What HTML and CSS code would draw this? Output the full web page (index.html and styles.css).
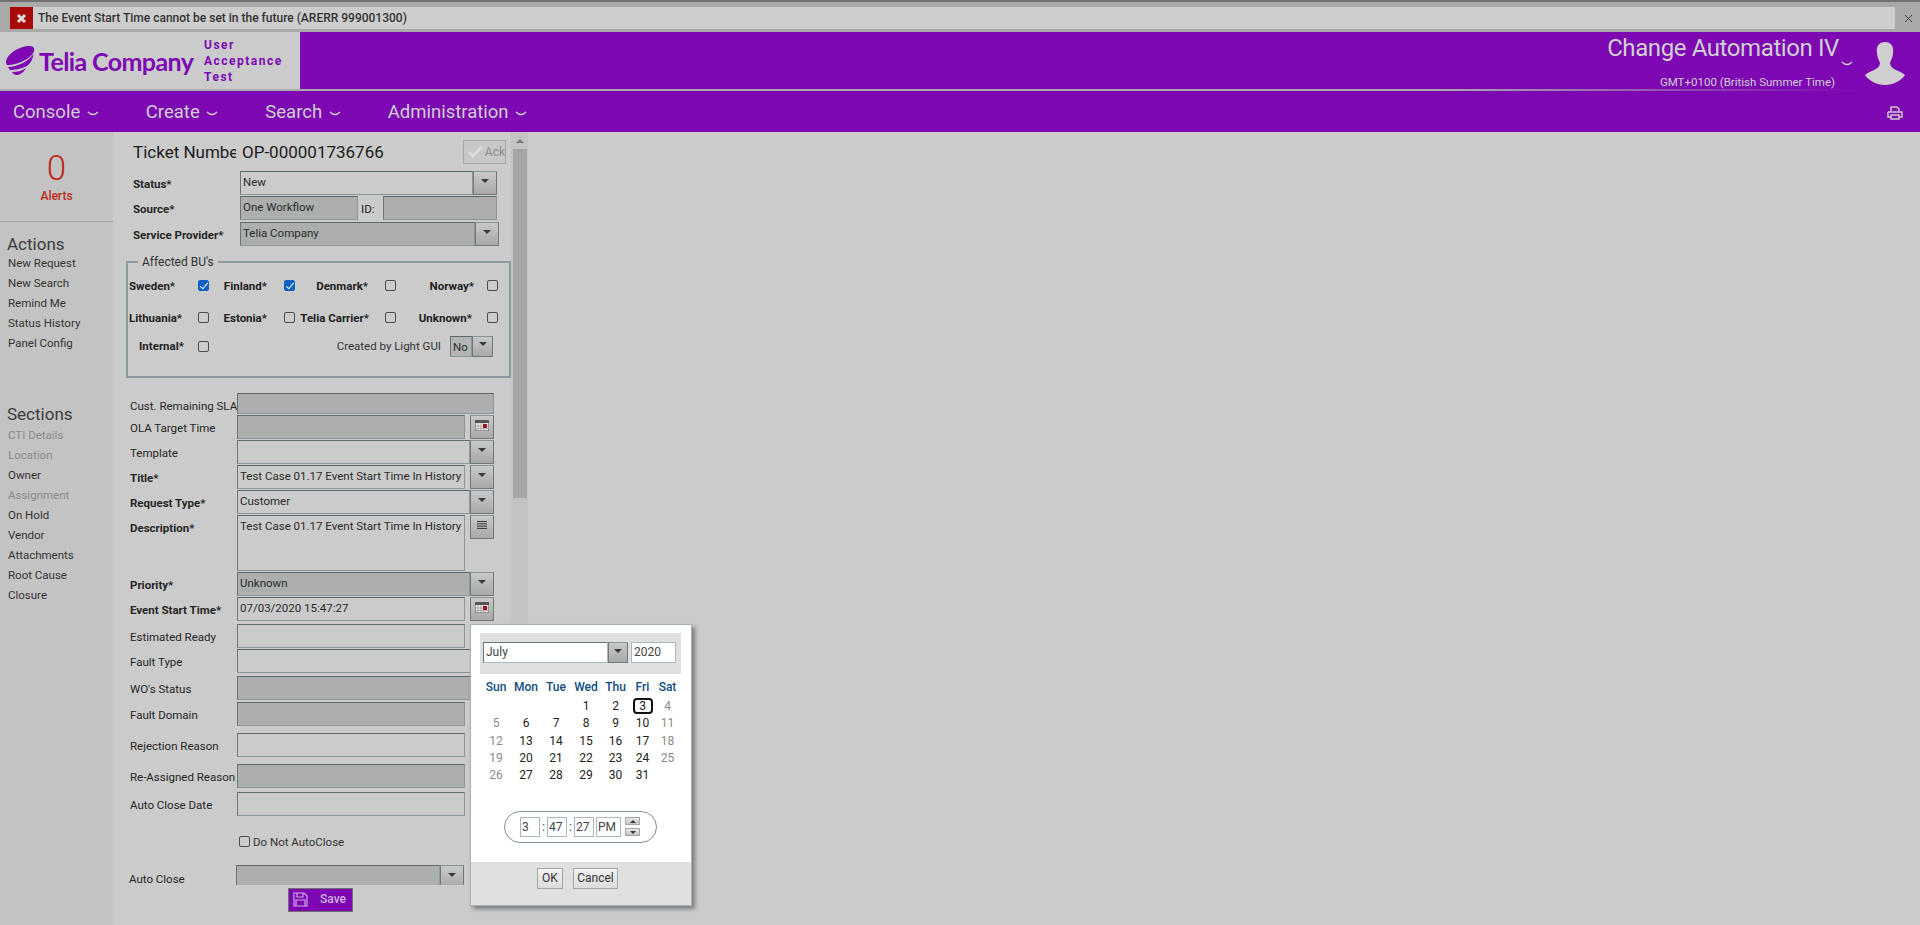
FILE: index.html
```html
<!DOCTYPE html>
<html lang="en">
<head>
<meta charset="UTF-8" />
<title>Change Request</title>
<link rel="stylesheet" href="styles.css">
</head>
<body>

<div class="error-strip">
  <div class="error-bar">
    <span class="error-icon"><svg width="11" height="11" viewBox="0 0 11 11"><path d="M2 2 L9 9 M9 2 L2 9" stroke="#ddd" stroke-width="3"/></svg></span>
    <span class="error-text">The Event Start Time cannot be set in the future (ARERR 999001300)</span>
  </div>
  <span class="error-close"><svg width="9" height="9" viewBox="0 0 9 9"><path d="M1 1 L8 8 M8 1 L1 8" stroke="#444" stroke-width="1"/></svg></span>
</div>

<header class="header">
  <div class="brand">
    <svg class="pebble" width="30" height="30" viewBox="0 0 30 30">
      <path fill="#7c07b3" d="M1 15 C3 7 15 0 24 0 C28 0 30 2 29 5 C28 11 14 19 2 19 C1 18 1 16 1 15 Z"/>
      <path fill="#7c07b3" d="M3 21 C12 21 24 15 28.5 8 C28 13 25 18 22 20 C16 23 9 24 5 24 Z"/>
      <path fill="#7c07b3" d="M7 26 C12 26 17 25 21 22 C19 26 15 29 12 29 C10 29 8 28 7 26 Z"/>
    </svg>
    <span class="brand-name">Telia Company</span>
    <div class="env">
      <span>User</span>
      <span>Acceptance</span>
      <span>Test</span>
    </div>
  </div>
  <div class="user">
    <div class="user-text">
      <div class="user-name">Change Automation IV
        <svg class="chev chev-user" width="12" height="6" viewBox="0 0 12 6"><path d="M1 1 Q6 6 11 1" fill="none" stroke="#ccc" stroke-width="1.5"/></svg>
      </div>
      <div class="user-zone">GMT+0100 (British Summer Time)</div>
    </div>
    <svg class="avatar" width="40" height="43" viewBox="0 0 40 43"><path fill="#cfcfcf" d="M20 0 C26 0 29 4 28 11 C28 15 26 18 25 21 C25 24 27 26 31 28 C35 30 38 31 40 33 C36 39 28 43 20 43 C12 43 4 39 0 33 C2 31 5 30 9 28 C13 26 15 24 15 21 C14 18 12 15 12 11 C11 4 14 0 20 0 Z"/></svg>
  </div>
</header>
<div class="header-line"></div>

<nav class="nav">
  <a class="nav-item">Console <svg class="chev" width="12" height="6" viewBox="0 0 12 6"><path d="M1 1 Q6 6 11 1" fill="none" stroke="#ccc" stroke-width="1.5"/></svg></a>
  <a class="nav-item">Create <svg class="chev" width="12" height="6" viewBox="0 0 12 6"><path d="M1 1 Q6 6 11 1" fill="none" stroke="#ccc" stroke-width="1.5"/></svg></a>
  <a class="nav-item">Search <svg class="chev" width="12" height="6" viewBox="0 0 12 6"><path d="M1 1 Q6 6 11 1" fill="none" stroke="#ccc" stroke-width="1.5"/></svg></a>
  <a class="nav-item">Administration <svg class="chev" width="12" height="6" viewBox="0 0 12 6"><path d="M1 1 Q6 6 11 1" fill="none" stroke="#ccc" stroke-width="1.5"/></svg></a>
  <svg class="printer" width="16" height="14" viewBox="0 0 16 14">
    <path d="M4 5 V1 H10 L12 3 V5 M1 6 H15 V11 H12 M4 11 H1 V6 M4 9 H12 V13 H4 Z" fill="none" stroke="#ccc" stroke-width="1.5"/>
  </svg>
</nav>

<main class="main">
  <aside class="sidebar">
    <div class="alerts">
      <div class="alerts-count">0</div>
      <div class="alerts-label">Alerts</div>
    </div>
    <h3 class="side-title">Actions</h3>
    <ul class="side-list">
      <li>New Request</li>
      <li>New Search</li>
      <li>Remind Me</li>
      <li>Status History</li>
      <li>Panel Config</li>
    </ul>
    <h3 class="side-title side-title-sections">Sections</h3>
    <ul class="side-list">
      <li class="muted">CTI Details</li>
      <li class="muted">Location</li>
      <li>Owner</li>
      <li class="muted">Assignment</li>
      <li>On Hold</li>
      <li>Vendor</li>
      <li>Attachments</li>
      <li>Root Cause</li>
      <li>Closure</li>
    </ul>
  </aside>

  <section class="form">
    <div class="ticket">
      <span class="ticket-label">Ticket Number</span>
      <span class="ticket-value">OP-000001736766</span>
      <button class="ack">
        <svg width="15" height="12" viewBox="0 0 15 12"><path d="M1 6 L5 10 L14 1" fill="none" stroke="#dcdcdc" stroke-width="3"/></svg>
        Ack
      </button>
    </div>

    <div class="top-row row-status">
      <label class="bold">Status*</label>
      <div class="box w-233">New</div><span class="arrow-btn"><i class="caret"></i></span>
    </div>
    <div class="top-row">
      <label class="bold">Source*</label>
      <div class="box dark w-118">One Workflow</div>
      <span class="id-label">ID:</span>
      <div class="box dark w-114"></div>
    </div>
    <div class="top-row row-service">
      <label class="bold">Service Provider*</label>
      <div class="box dark w-235">Telia Company</div><span class="arrow-btn"><i class="caret"></i></span>
    </div>

    <fieldset class="bus">
      <legend>Affected BU's</legend>
      <div class="bu-grid">
        <span class="bu">Sweden*</span><span class="check on"></span>
        <span class="bu bu-r17">Finland*</span><span class="check on"></span>
        <span class="bu bu-r17">Denmark*</span><span class="check"></span>
        <span class="bu bu-r13">Norway*</span><span class="check"></span>

        <span class="bu">Lithuania*</span><span class="check"></span>
        <span class="bu bu-r17">Estonia*</span><span class="check"></span>
        <span class="bu bu-r16">Telia Carrier*</span><span class="check"></span>
        <span class="bu bu-r15">Unknown*</span><span class="check"></span>

        <span class="bu bu-indent">Internal*</span><span class="check"></span>
        <div class="light-gui">
          <span>Created by Light GUI</span>
          <div class="box small">No</div><span class="arrow-btn small-btn"><i class="caret"></i></span>
        </div>
      </div>
    </fieldset>

    <div class="fields">
      <div class="row"><label>Cust. Remaining SLA</label><div class="box dark w-257 h-21"></div></div>
      <div class="row"><label>OLA Target Time</label><div class="box dark w-228"></div><span class="icon-btn"><svg class="cal" width="14" height="11" viewBox="0 0 14 11"><rect width="14" height="11" fill="#e8e8e8" stroke="#444"/><rect y="0" width="14" height="3" fill="#555"/><path d="M3 3 V11 M6 3 V11 M9 3 V11 M0 6 H14 M0 8.5 H14" stroke="#999" stroke-width=".7"/><rect x="8" y="4" width="4" height="4" fill="#a01020"/></svg></span></div>
      <div class="row"><label>Template</label><div class="box w-233"></div><span class="arrow-btn"><i class="caret"></i></span></div>
      <div class="row"><label class="bold">Title*</label><div class="box w-228">Test Case 01.17 Event Start Time In History</div><span class="icon-btn"><i class="caret"></i></span></div>
      <div class="row"><label class="bold">Request Type*</label><div class="box w-233">Customer</div><span class="arrow-btn"><i class="caret"></i></span></div>
      <div class="row"><label class="bold">Description*</label><div class="box w-228 h-56">Test Case 01.17 Event Start Time In History</div><span class="icon-btn"><svg width="10" height="8" viewBox="0 0 10 8"><path d="M0 .5 H10 M0 2.8 H10 M0 5.1 H10 M0 7.4 H10" stroke="#333" stroke-width="1"/></svg></span></div>
      <div class="row"><label class="bold">Priority*</label><div class="box dark w-233">Unknown</div><span class="arrow-btn"><i class="caret"></i></span></div>
      <div class="row"><label class="bold">Event Start Time*</label><div class="box w-228">07/03/2020 15:47:27</div><span class="icon-btn"><svg class="cal" width="14" height="11" viewBox="0 0 14 11"><rect width="14" height="11" fill="#e8e8e8" stroke="#444"/><rect y="0" width="14" height="3" fill="#555"/><path d="M3 3 V11 M6 3 V11 M9 3 V11 M0 6 H14 M0 8.5 H14" stroke="#999" stroke-width=".7"/><rect x="8" y="4" width="4" height="4" fill="#a01020"/></svg></span></div>
      <div class="row"><label>Estimated Ready</label><div class="box w-228"></div></div>
      <div class="row"><label>Fault Type</label><div class="box w-257"></div></div>
      <div class="row"><label>WO's Status</label><div class="box dark w-257"></div></div>
      <div class="row"><label>Fault Domain</label><div class="box dark w-228"></div></div>
      <div class="row"><label>Rejection Reason</label><div class="box w-228"></div></div>
      <div class="row"><label>Re-Assigned Reason</label><div class="box dark w-228"></div></div>
      <div class="row"><label>Auto Close Date</label><div class="box w-228"></div></div>
      <div class="row row-check"><span class="check"></span><span>Do Not AutoClose</span></div>
      <div class="row row-autoclose"><label>Auto Close</label><div class="box dark w-204"></div><span class="arrow-btn"><i class="caret"></i></span></div>
    </div>

    <button class="save">
      <svg width="15" height="15" viewBox="0 0 15 15"><path d="M1 1 H11 L14 4 V14 H1 Z M4 1 V5 H10 V1 M3 14 V8 H12 V14" fill="none" stroke="#cfa8e4" stroke-width="1.2"/></svg>
      <span>Save</span>
    </button>
  </section>

  <div class="scroll">
    <i class="scroll-up"></i>
    <div class="scroll-thumb"></div>
  </div>
</main>

<div class="picker">
  <div class="picker-top">
    <div class="pick-month">July</div><span class="arrow-btn pick-arrow"><i class="caret"></i></span>
    <div class="pick-year">2020</div>
  </div>
  <div class="cal-grid">
    <b>Sun</b><b>Mon</b><b>Tue</b><b>Wed</b><b>Thu</b><b>Fri</b><b>Sat</b>
    <span></span><span></span><span></span><span>1</span><span>2</span><span><em class="today">3</em></span><span class="off">4</span>
    <span class="off">5</span><span>6</span><span>7</span><span>8</span><span>9</span><span>10</span><span class="off">11</span>
    <span class="off">12</span><span>13</span><span>14</span><span>15</span><span>16</span><span>17</span><span class="off">18</span>
    <span class="off">19</span><span>20</span><span>21</span><span>22</span><span>23</span><span>24</span><span class="off">25</span>
    <span class="off">26</span><span>27</span><span>28</span><span>29</span><span>30</span><span>31</span><span></span>
  </div>
  <div class="time">
    <div class="time-field">3</div><span class="colon">:</span>
    <div class="time-field">47</div><span class="colon">:</span>
    <div class="time-field">27</div>
    <div class="time-field time-ampm">PM</div>
    <div class="spin">
      <span class="spin-btn"><i class="caret caret-up"></i></span>
      <span class="spin-btn"><i class="caret"></i></span>
    </div>
  </div>
  <div class="picker-foot">
    <button class="pick-btn ok">OK</button>
    <button class="pick-btn">Cancel</button>
  </div>
</div>

</body>
</html>
```

FILE: styles.css
```css
* {
  box-sizing: border-box;
}
html, body {
  margin: 0;
  height: 925px;
  overflow: hidden;
}
body {
  position: relative;
  display: flex;
  flex-direction: column;
  font-family: Roboto, "Liberation Sans", sans-serif;
  font-size: 12px;
  color: #222;
  background: #cbcbcb;
}

/* error strip */
.error-strip {
  display: flex;
  align-items: center;
  height: 32px;
  padding: 4px 0 2px 10px;
  background: #a9a9a9;
  border-top: 2px solid #6f6f6f;
}
.error-bar {
  display: flex;
  align-items: center;
  width: 1885px;
  height: 22px;
  background: #cdcdcd;
}
.error-icon {
  display: flex;
  align-items: center;
  justify-content: center;
  width: 23px;
  height: 22px;
  background: #a80a0a;
}
.error-text {
  margin-left: 5px;
  font-size: 12px;
  font-weight: 500;
  color: #333;
}
.error-close {
  display: flex;
  margin-left: 9px;
}

/* header */
.header {
  display: flex;
  justify-content: space-between;
  height: 57px;
  background: #7c07b3;
}
.brand {
  display: flex;
  align-items: center;
  width: 300px;
  padding-left: 5px;
  background: #cbcbcb;
}
.brand-name {
  margin-left: 4px;
  width: 165px;
  font-family: Lato, sans-serif;
  font-size: 25px;
  font-weight: 700;
  letter-spacing: -0.6px;
  color: #7c07b3;
}
.env {
  display: flex;
  flex-direction: column;
  font-size: 12px;
  font-weight: 700;
  line-height: 16px;
  letter-spacing: 1.5px;
  color: #7c07b3;
}
.user {
  display: flex;
  align-items: flex-start;
  padding: 10px 15px 0 0;
}
.user-text {
  display: flex;
  flex-direction: column;
  align-items: flex-end;
  margin-right: 12px;
  color: #d0d0d0;
}
.user-name {
  display: flex;
  align-items: center;
  height: 40px;
  margin-top: 0;
  font-size: 24px;
  letter-spacing: -0.4px;
  white-space: pre;
}
.chev-user {
  margin: 4px 0 0 6px;
}
.user-zone {
  align-self: flex-end;
  margin: -6px 18px 0 0;
  font-size: 11.5px;
  line-height: 13px;
}
.header-line {
  height: 2px;
  background: linear-gradient(to right, #ababab 75%, #7c07b3 97%);
}

/* nav */
.nav {
  display: flex;
  align-items: center;
  gap: 47px;
  height: 41px;
  padding-left: 13px;
  background: #7c07b3;
}
.nav-item {
  display: flex;
  align-items: center;
  font-size: 18.5px;
  color: #cfcfcf;
  white-space: pre;
}
.chev {
  margin: 4px 0 0 2px;
}
.printer {
  margin: 3px 17px 0 auto;
}

/* main */
.main {
  display: flex;
  flex: 1;
  min-height: 0;
}
.sidebar {
  width: 113px;
  background: #c3c3c3;
  color: #333;
}
.alerts {
  height: 90px;
  padding-top: 19px;
  border-bottom: 1px solid #a5a5a5;
  text-align: center;
  color: #bd2a20;
}
.alerts-count {
  font-size: 35px;
  line-height: 36px;
  font-weight: 300;
}
.alerts-label {
  margin-top: 2px;
  font-size: 12px;
  line-height: 14px;
  font-weight: 500;
}
.side-title {
  height: 19px;
  margin: 12px 0 0;
  padding-left: 7px;
  font-size: 17px;
  line-height: 20px;
  font-weight: 400;
  color: #3c3c3c;
}
.side-title-sections {
  height: 21px;
  margin-top: 51px;
}
.side-list {
  margin: 0;
  padding: 0 0 0 8px;
  list-style: none;
  font-size: 11.5px;
  line-height: 20px;
}
.side-list .muted {
  color: #8a8a8a;
}

/* form */
.form {
  width: 398px;
  overflow: hidden;
}
.ticket {
  display: flex;
  align-items: center;
  height: 24px;
  margin: 8px 0 7px 20px;
  font-size: 17px;
  color: #1c1c1c;
}
.ticket-label {
  width: 103px;
  overflow: hidden;
  white-space: nowrap;
}
.ticket-value {
  margin-left: 6px;
}
.ack {
  display: flex;
  align-items: center;
  gap: 2px;
  width: 43px;
  height: 24px;
  margin-left: auto;
  margin-right: 5px;
  padding: 0 0 0 4px;
  border: 1px solid #a6a6a6;
  background: #c8c8c8;
  font-family: inherit;
  font-size: 12px;
  color: #8c8c8c;
}
.top-row {
  display: flex;
  align-items: flex-start;
  height: 24px;
  margin: 0 0 1px 20px;
}
.row-service {
  margin-top: 2px;
}
.top-row label {
  width: 107px;
  line-height: 26px;
}
label {
  font-size: 11.5px;
  color: #262626;
}
label.bold, .bu {
  font-weight: 700;
  font-size: 11.5px;
}
.box {
  height: 24px;
  padding: 2px 2px 0;
  border: 1px solid #8a979b;
  border-top-color: #5f696c;
  border-left-color: #6a7578;
  line-height: 16px;
  font-size: 11.5px;
  color: #2a2a2a;
  flex-shrink: 0;
}
.dark {
  background: #adafae;
}
.h-21 { height: 21px; }
.h-56 { height: 56px; }
.w-118 { width: 118px; }
.w-114 { width: 114px; }
.w-204 { width: 204px; }
.w-228 { width: 228px; }
.w-233 { width: 233px; }
.w-235 { width: 235px; }
.w-257 { width: 257px; }
.id-label {
  width: 25px;
  padding-left: 3px;
  line-height: 26px;
  font-size: 11.5px;
}
.arrow-btn, .icon-btn {
  display: flex;
  align-items: center;
  justify-content: center;
  flex-shrink: 0;
  width: 24px;
  height: 24px;
  border: 1px solid #70787b;
  border-top-color: #8b9497;
  background: linear-gradient(#c9c9c9, #a8a8a8);
}
.icon-btn {
  margin-left: 5px;
  padding-bottom: 4px;
}
.arrow-btn {
  padding-bottom: 4px;
}
.caret {
  width: 0;
  height: 0;
  border-left: 4px solid transparent;
  border-right: 4px solid transparent;
  border-top: 4px solid #3a3a3a;
}
.caret-up {
  border-top: 0;
  border-bottom: 4px solid #3a3a3a;
}

/* affected BU's */
.bus {
  width: 385px;
  height: 123px;
  margin: 9px 0 0 13px;
  padding: 0;
  border: 2px solid #8b9a9f;
}
.bus legend {
  margin-left: 10px;
  padding: 0 4px;
  font-size: 12px;
  line-height: 14px;
  color: #333;
}
.bu-grid {
  display: grid;
  grid-template-columns: 69px 13px 73px 13px 88px 13px 89px 13px;
  grid-template-rows: 33px 31px 26px;
  align-items: center;
  margin-left: 1px;
}
.bu-grid .bu {
  white-space: nowrap;
}
.bu-r17, .bu-r16, .bu-r15, .bu-r13 {
  text-align: right;
}
.bu-r17 { padding-right: 17px; }
.bu-r16 { padding-right: 16px; }
.bu-r15 { padding-right: 15px; }
.bu-r13 { padding-right: 13px; }
.bu-indent {
  padding-left: 10px;
}
.check {
  position: relative;
  display: block;
  width: 11px;
  height: 11px;
  border: 1px solid #4b4b4b;
  border-radius: 2px;
}
.check.on {
  border-color: #0f62c4;
  background: #0f62c4;
}
.check.on::after {
  content: "";
  position: absolute;
  left: 3px;
  top: 0;
  width: 3px;
  height: 7px;
  border: solid #fff;
  border-width: 0 1.5px 1.5px 0;
  transform: rotate(40deg);
}
.light-gui {
  grid-column: 3 / 9;
  display: flex;
  align-items: center;
  justify-content: flex-end;
  padding-right: 7px;
  font-size: 11.5px;
  color: #333;
}
.light-gui span:first-child {
  margin-right: 9px;
}
.small {
  width: 22px;
  height: 21px;
  background: #b4b6b5;
}
.small-btn {
  width: 21px;
  height: 21px;
}

/* lower fields */
.fields {
  display: grid;
  grid-template-rows: 22px 25px 25px 25px 25px 57px 25px 27px 25px 27px 26px 31px 31px 28px 44px 29px 20px;
  margin: 15px 0 0 17px;
}
.row {
  display: flex;
  align-items: flex-start;
}
.row label {
  width: 107px;
  line-height: 26px;
  white-space: nowrap;
}
.row-check {
  align-items: center;
  gap: 3px;
  height: 11px;
  margin: 0 0 0 109px;
  font-size: 11.5px;
  color: #333;
}
.row-autoclose {
  overflow: hidden;
  margin-left: -1px;
}
.row-autoclose label {
  margin-top: 1px;
}
.save {
  display: flex;
  align-items: center;
  width: 65px;
  height: 24px;
  margin: 3px 0 0 175px;
  padding: 0 0 2px 4px;
  border: 1px solid #6f6f6f;
  background: #7c07b3;
  font-family: inherit;
  font-size: 12px;
  font-weight: 500;
  color: #d0b0e4;
}
.save span {
  margin-left: 12px;
}

/* scrollbar */
.scroll {
  width: 17px;
  height: 770px;
  background: #c4c4c4;
}
.scroll-up {
  display: block;
  width: 0;
  height: 0;
  margin: 7px auto 0;
  border-left: 4px solid transparent;
  border-right: 4px solid transparent;
  border-bottom: 4px solid #7c7c7c;
}
.scroll-thumb {
  width: 14px;
  height: 349px;
  margin: 6px 0 0 2px;
  background: #a6a6a6;
}

/* date picker */
.picker {
  position: absolute;
  left: 470px;
  top: 624px;
  width: 222px;
  height: 282px;
  background: #fff;
  border: 1px solid #a3b2b9;
  box-shadow: 3px 3px 4px rgba(60, 60, 60, 0.55);
  display: flex;
  flex-direction: column;
}
.picker-top {
  display: flex;
  height: 41px;
  margin: 8px 10px 0 9px;
  padding: 9px 0 0 3px;
  background: #dfe1e1;
}
.pick-month, .pick-year, .time-field {
  height: 21px;
  background: #fff;
  border: 1px solid #a9b8be;
  font-size: 12px;
  line-height: 19px;
  padding-left: 2px;
  color: #444;
}
.pick-month {
  width: 125px;
  border-color: #6a7578 #a9b8be #a9b8be #6a7578;
}
.pick-arrow {
  width: 20px;
  height: 21px;
  margin-right: 3px;
}
.pick-year {
  width: 45px;
}
.cal-grid {
  display: grid;
  grid-template-columns: 30px 30px 30px 30px 29px 25px 25px;
  grid-template-rows: 21.5px repeat(5, 17.3px);
  margin: 2px 0 0 10px;
  align-items: center;
  text-align: center;
  font-size: 12px;
  color: #222;
}
.cal-grid b {
  font-weight: 500;
  color: #0f4c81;
}
.cal-grid .off {
  color: #8a8a8a;
}
.today {
  display: block;
  width: 20px;
  height: 16px;
  margin: 0 auto;
  border: 2px solid #111;
  border-radius: 4px;
  font-style: normal;
  line-height: 12px;
}
.time {
  display: flex;
  align-items: center;
  width: 153px;
  height: 32px;
  margin: 27px 0 0 33px;
  padding-left: 15px;
  border: 1px solid #7f8f96;
  border-radius: 16px;
}
.time-field {
  width: 20px;
  height: 20px;
  padding-left: 1px;
  line-height: 18px;
}
.colon {
  width: 7px;
  text-align: center;
  color: #444;
}
.time-ampm {
  width: 25px;
  margin-left: 2px;
}
.spin {
  display: flex;
  flex-direction: column;
  gap: 3px;
  margin-left: 4px;
}
.spin-btn {
  display: flex;
  align-items: center;
  justify-content: center;
  width: 15px;
  height: 8px;
  background: linear-gradient(#e8e8e8, #c4c4c4);
  border: 1px solid #a0a8ab;
}
.spin-btn .caret {
  border-left-width: 3px;
  border-right-width: 3px;
  border-top-width: 3px;
}
.spin-btn .caret-up {
  border-top-width: 0;
  border-bottom-width: 3px;
}
.picker-foot {
  display: flex;
  gap: 10px;
  height: 43px;
  margin-top: 19px;
  padding: 6px 0 0 66px;
  background: #dfe1e1;
}
.pick-btn {
  height: 21px;
  width: 45px;
  padding: 0;
  border: 1px solid #a0a8ab;
  background: linear-gradient(#f2f2f2, #dcdcdc);
  font-family: inherit;
  font-size: 12px;
  color: #333;
}
.ok {
  width: 26px;
}
```
